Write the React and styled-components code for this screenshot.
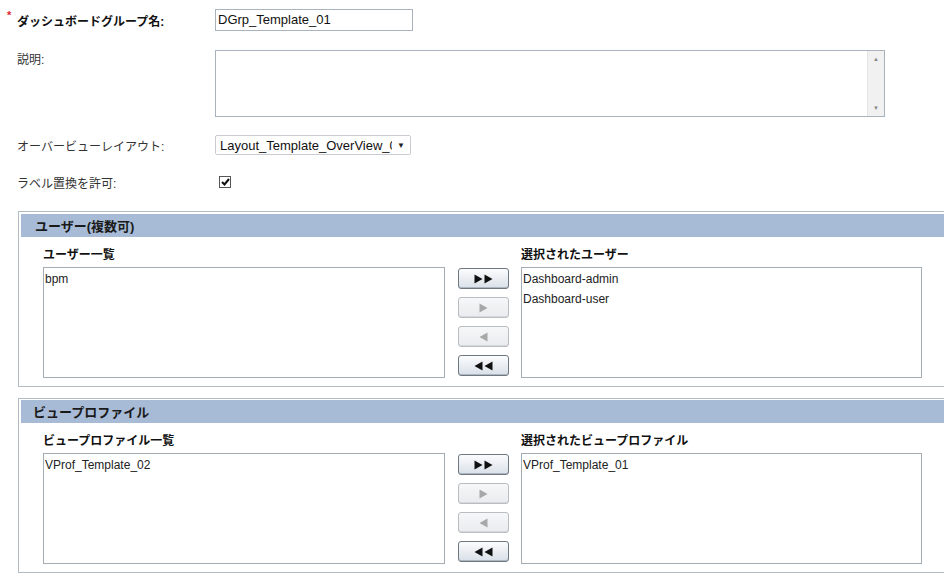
import React from "react";
import styled, { createGlobalStyle } from "styled-components";

const GlobalStyle = createGlobalStyle`
  html, body {
    margin: 0;
    padding: 0;
    background: #fff;
    overflow: hidden;
  }
  body {
    font-family: "Liberation Sans", Arial, "Noto Sans CJK JP", sans-serif;
    font-size: 12px;
    color: #222;
  }
`;

const Page = styled.div`
  width: 944px;
  height: 577px;
  overflow: hidden;
  padding-top: 9px;
  box-sizing: border-box;
`;

const FormRow = styled.div`
  display: flex;
  align-items: ${(p) => (p.$top ? "flex-start" : "center")};
  margin-top: ${(p) => p.$mt || 0}px;
  height: ${(p) => p.$h}px;
`;

const Label = styled.div`
  position: relative;
  width: 215px;
  flex-shrink: 0;
  padding-left: 17px;
  box-sizing: border-box;
  font-size: 12px;
  font-weight: ${(p) => (p.$bold ? "bold" : "normal")};
  color: ${(p) => (p.$bold ? "#111" : "#333")};
  padding-top: ${(p) => p.$pt || 0}px;
  white-space: nowrap;
`;

const Required = styled.span`
  position: absolute;
  left: 7px;
  top: -3px;
  color: #e0242e;
  font-size: 11px;
  font-weight: bold;
`;

const TextInput = styled.div`
  width: 198px;
  height: 22px;
  box-sizing: border-box;
  border: 1px solid #a9b3be;
  padding: 0 2px;
  font-size: 13px;
  line-height: 20px;
  color: #111;
`;

const TextArea = styled.div`
  width: 670px;
  height: 67px;
  box-sizing: border-box;
  border: 1px solid #a9b3be;
  display: flex;
  justify-content: flex-end;
`;

const ScrollBar = styled.div`
  width: 16px;
  background: #f1f1f1;
  border-left: 1px solid #e4e4e4;
  display: flex;
  flex-direction: column;
  justify-content: space-between;
  align-items: center;
  padding: 5px 0;
  font-size: 6px;
  color: #888;
`;

const SelectBox = styled.div`
  width: 196px;
  height: 20px;
  box-sizing: border-box;
  border: 1px solid #c9cdd2;
  border-radius: 2px;
  display: flex;
  align-items: center;
  padding-left: 4px;
  font-size: 13px;
  color: #111;
`;

const SelectText = styled.span`
  flex: 1;
  min-width: 0;
  overflow: hidden;
  white-space: nowrap;
`;

const SelectArrow = styled.span`
  width: 18px;
  flex-shrink: 0;
  text-align: center;
  font-size: 8px;
  color: #222;
`;

const CheckWrap = styled.div`
  margin-left: 4px;
  width: 12px;
  height: 12px;
  box-sizing: border-box;
  border: 1px solid #555;
  background: #fff;
  display: flex;
  align-items: center;
  justify-content: center;
`;

const Section = styled.div`
  margin-left: 18px;
  margin-top: ${(p) => p.$mt}px;
  width: 960px;
  box-sizing: border-box;
  border: 1px solid #b2bac2;
  padding: ${(p) => p.$pt}px 2px 8px 2px;
`;

const SectionHeader = styled.div`
  height: 23px;
  background: #a7bbd6;
  padding-left: ${(p) => p.$pl}px;
  display: flex;
  align-items: center;
  font-size: 13px;
  font-weight: bold;
  color: #1a1a1a;
`;

const Shuttle = styled.div`
  display: flex;
  align-items: flex-start;
  padding-left: 22px;
  margin-top: 7px;
`;

const ListColumn = styled.div`
  display: flex;
  flex-direction: column;
  width: ${(p) => p.$w}px;
`;

const ListTitle = styled.div`
  height: 23px;
  line-height: 23px;
  font-size: 12px;
  font-weight: bold;
  color: #111;
`;

const ListBox = styled.div`
  height: 111px;
  box-sizing: border-box;
  border: 1px solid #a4acb4;
  padding: 1px 1px;
`;

const ListItem = styled.div`
  height: 20px;
  line-height: 20px;
  font-size: 12px;
  color: #222;
`;

const ButtonColumn = styled.div`
  display: flex;
  flex-direction: column;
  gap: 8px;
  margin: 24px 12px 0 13px;
`;

const MoveButton = styled.div`
  width: 51px;
  height: 21px;
  box-sizing: border-box;
  border: 1px solid ${(p) => (p.$disabled ? "#b9bcc0" : "#6f7881")};
  border-radius: 3px;
  background: ${(p) =>
    p.$disabled
      ? "linear-gradient(#f6f7f8, #e9ebee)"
      : "linear-gradient(#fbfcfd, #d9e0e8)"};
  box-shadow: inset 0 -1px 0 ${(p) => (p.$disabled ? "#d5d8dc" : "#aeb7c1")};
  display: flex;
  align-items: center;
  justify-content: center;
  gap: 1px;
`;

const Tri = ({ dir, color }) => (
  <svg width="9" height="10" viewBox="0 0 9 10">
    {dir === "right" ? (
      <polygon points="0.5,0.5 8.5,5 0.5,9.5" fill={color} />
    ) : (
      <polygon points="8.5,0.5 0.5,5 8.5,9.5" fill={color} />
    )}
  </svg>
);

const Buttons = () => (
  <ButtonColumn>
    <MoveButton>
      <Tri dir="right" color="#111" />
      <Tri dir="right" color="#111" />
    </MoveButton>
    <MoveButton $disabled>
      <Tri dir="right" color="#a8a8a8" />
    </MoveButton>
    <MoveButton $disabled>
      <Tri dir="left" color="#a8a8a8" />
    </MoveButton>
    <MoveButton>
      <Tri dir="left" color="#111" />
      <Tri dir="left" color="#111" />
    </MoveButton>
  </ButtonColumn>
);

const ShuttleBlock = ({ title, pl, mt, pt, leftTitle, rightTitle, left, right }) => (
  <Section $mt={mt} $pt={pt}>
    <SectionHeader $pl={pl}>{title}</SectionHeader>
    <Shuttle>
      <ListColumn $w={402}>
        <ListTitle>{leftTitle}</ListTitle>
        <ListBox>
          {left.map((i) => (
            <ListItem key={i}>{i}</ListItem>
          ))}
        </ListBox>
      </ListColumn>
      <Buttons />
      <ListColumn $w={401}>
        <ListTitle>{rightTitle}</ListTitle>
        <ListBox>
          {right.map((i) => (
            <ListItem key={i}>{i}</ListItem>
          ))}
        </ListBox>
      </ListColumn>
    </Shuttle>
  </Section>
);

export default function App() {
  return (
    <Page>
      <GlobalStyle />
      <FormRow $h={22}>
        <Label $bold>
          <Required>*</Required>
          ダッシュボードグループ名:
        </Label>
        <TextInput>DGrp_Template_01</TextInput>
      </FormRow>

      <FormRow $mt={19} $h={67} $top>
        <Label $pt={0}>説明:</Label>
        <TextArea>
          <ScrollBar>
            <span>▲</span>
            <span>▼</span>
          </ScrollBar>
        </TextArea>
      </FormRow>

      <FormRow $mt={18} $h={20}>
        <Label>オーバービューレイアウト:</Label>
        <SelectBox>
          <SelectText>Layout_Template_OverView_01</SelectText>
          <SelectArrow>▼</SelectArrow>
        </SelectBox>
      </FormRow>

      <FormRow $mt={21} $h={12}>
        <Label>ラベル置換を許可:</Label>
        <CheckWrap>
          <svg width="9" height="8" viewBox="0 0 9 8">
            <polyline
              points="1,4 3.5,6.5 8,1"
              fill="none"
              stroke="#111"
              strokeWidth="2"
            />
          </svg>
        </CheckWrap>
      </FormRow>

      <ShuttleBlock
        mt={23}
        pt={2}
        pl={14}
        title="ユーザー(複数可)"
        leftTitle="ユーザー一覧"
        rightTitle="選択されたユーザー"
        left={["bpm"]}
        right={["Dashboard-admin", "Dashboard-user"]}
      />

      <ShuttleBlock
        mt={11}
        pt={1}
        pl={12}
        title="ビュープロファイル"
        leftTitle="ビュープロファイル一覧"
        rightTitle="選択されたビュープロファイル"
        left={["VProf_Template_02"]}
        right={["VProf_Template_01"]}
      />
    </Page>
  );
}
